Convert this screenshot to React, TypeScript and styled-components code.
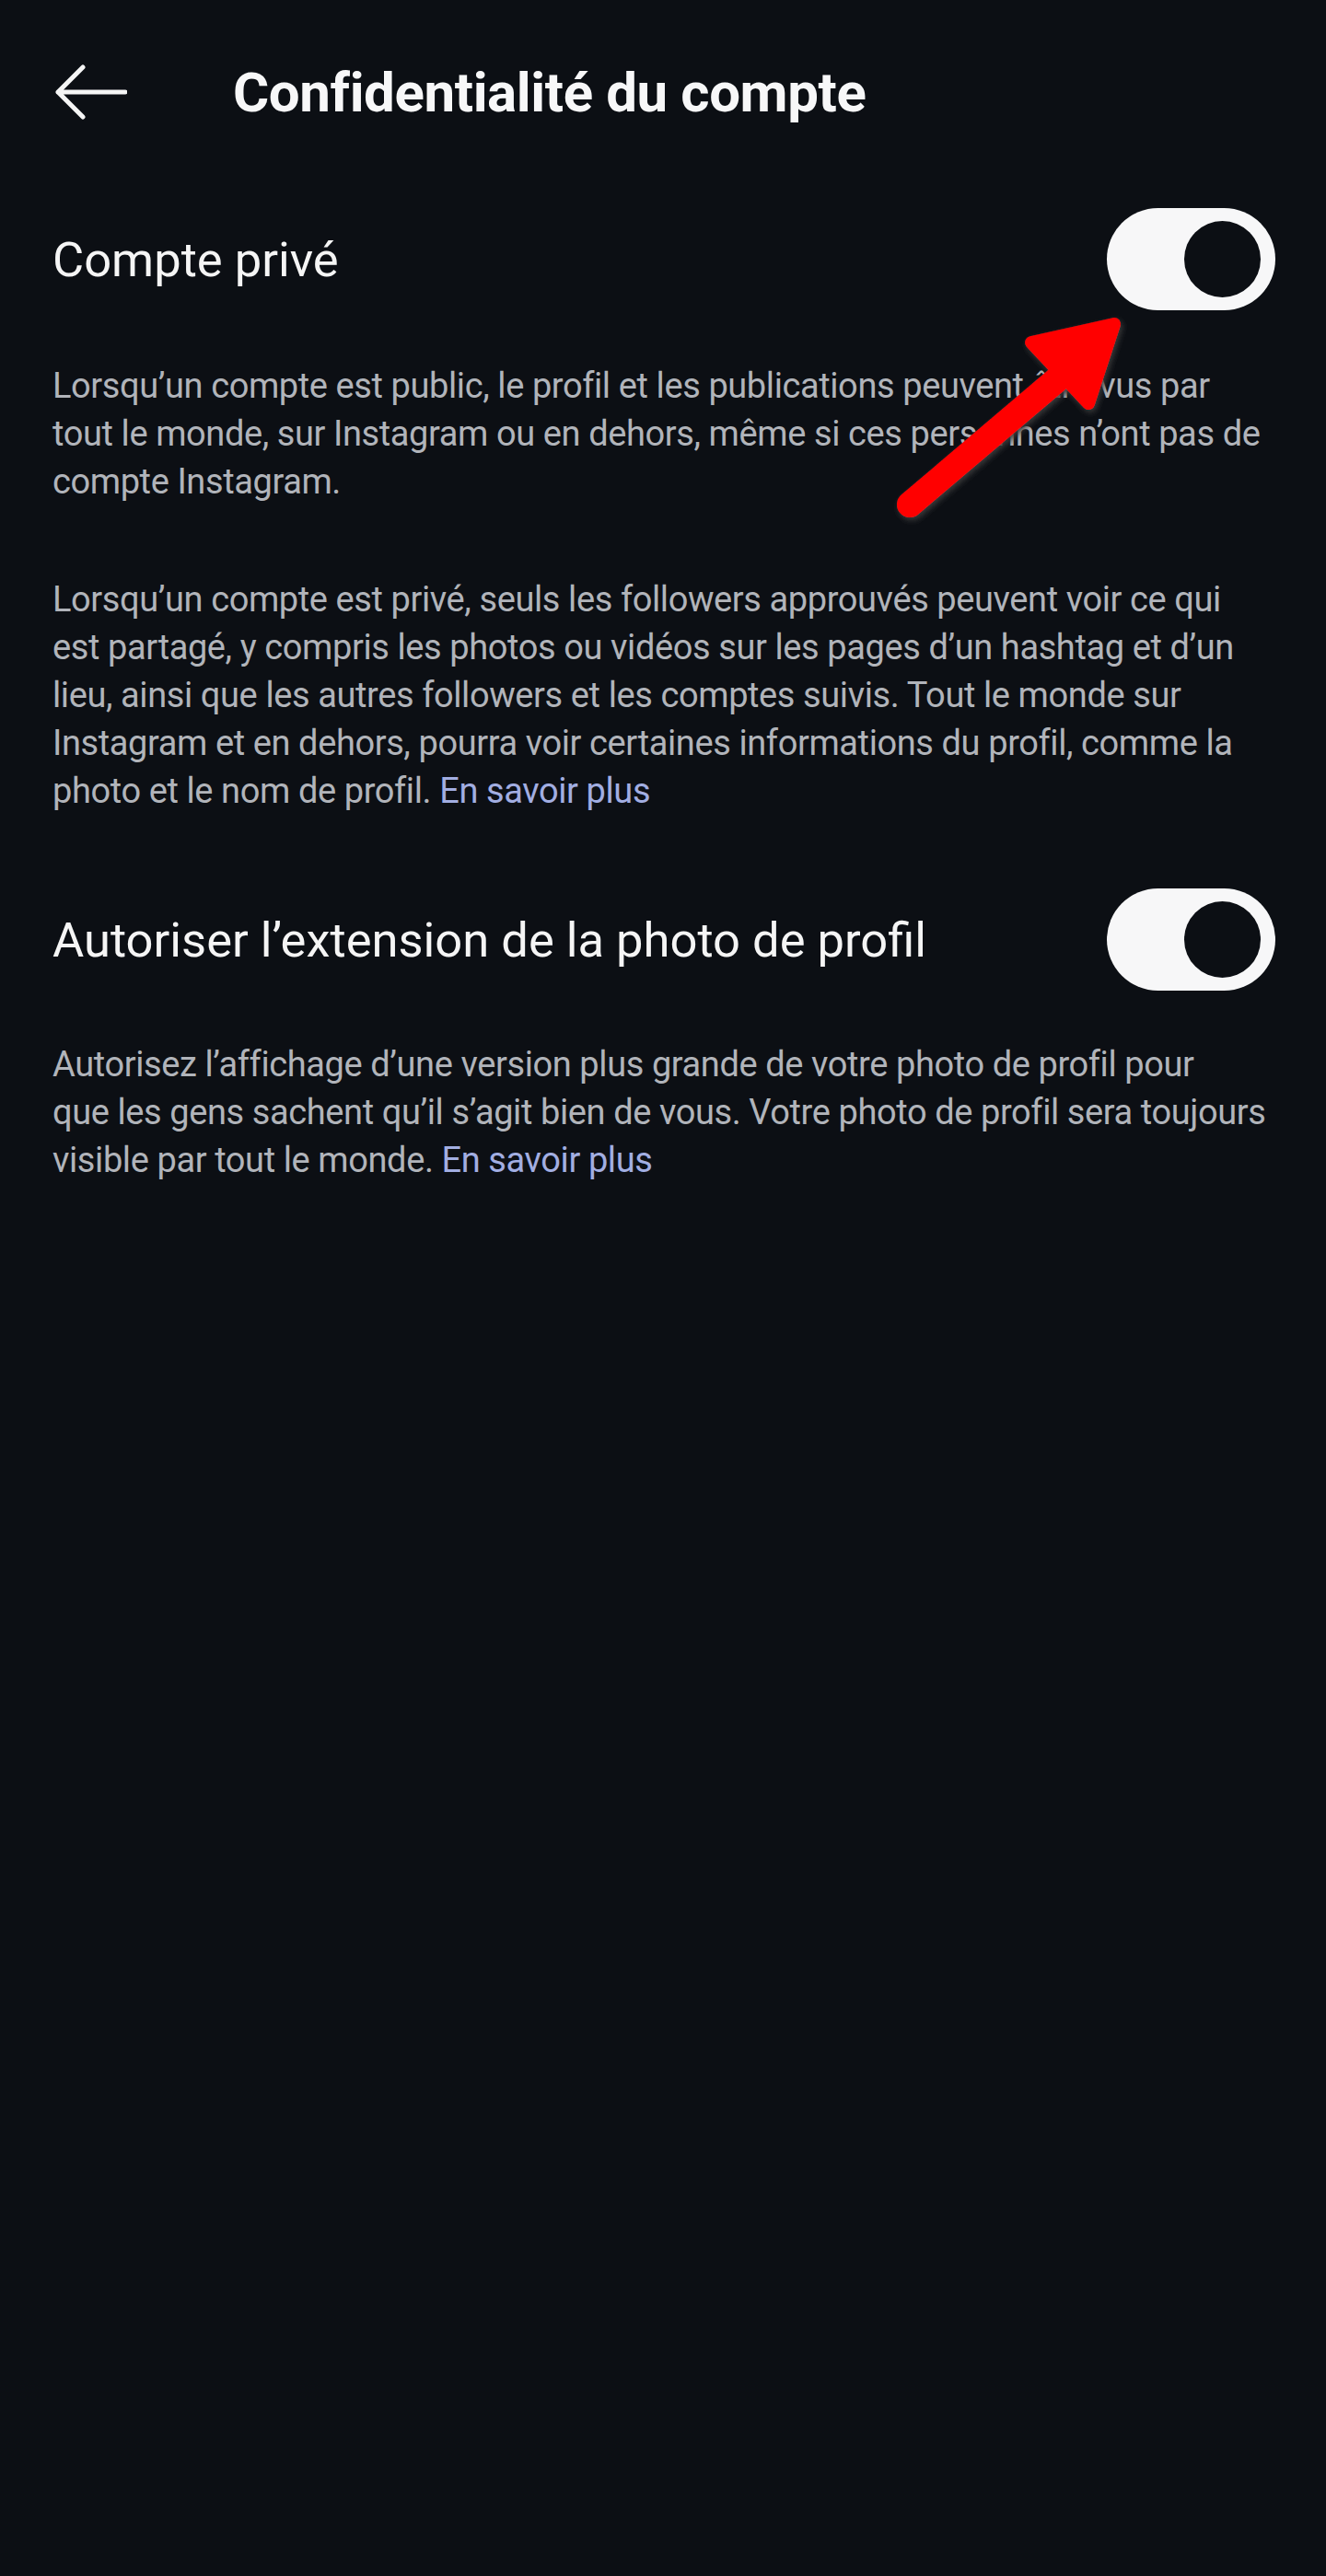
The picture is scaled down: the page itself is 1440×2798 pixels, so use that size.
import styled, { createGlobalStyle } from "styled-components";

const GlobalStyle = createGlobalStyle`
  html, body {
    margin: 0;
    padding: 0;
    background: #0c0f14;
  }
  * {
    box-sizing: border-box;
  }
`;

function BackArrow() {
  return (
    <svg width="80" height="60" viewBox="0 0 80 60" fill="none">
      <path
        d="M78 30H5M32 3L5 30L32 57"
        stroke="#f5f5f5"
        strokeWidth="5"
        strokeLinecap="round"
        strokeLinejoin="round"
      />
    </svg>
  );
}

type ToggleProps = { on?: boolean };

function Toggle({ on = true }: ToggleProps) {
  return (
    <Switch $on={on} role="switch" aria-checked={on}>
      <Knob />
    </Switch>
  );
}

// lines are given one by one so they wrap where the screenshot wraps
function Lines({ lines }: { lines: string[] }) {
  return (
    <>
      {lines.map((l, i) => (
        <span key={i}>
          {l}
          {i < lines.length - 1 && <br />}
        </span>
      ))}
    </>
  );
}

function PointerArrow() {
  return (
    <Annotation width="1440" height="600" viewBox="0 0 1440 600">
      <defs>
        <filter id="halo" x="-20%" y="-20%" width="140%" height="140%">
          <feDropShadow dx="2" dy="3" stdDeviation="3" floodColor="#3a3a3a" floodOpacity="1" />
        </filter>
      </defs>
      <g filter="url(#halo)">
        <line x1="988" y1="548" x2="1160" y2="402" stroke="#ff0000" strokeWidth="28" strokeLinecap="round" />
        <polygon
          points="1120,372 1210,352 1182,438"
          fill="#ff0000"
          stroke="#ff0000"
          strokeWidth="14"
          strokeLinejoin="round"
        />
      </g>
    </Annotation>
  );
}

export default function App() {
  return (
    <Page>
      <GlobalStyle />
      <Header>
        <BackButton aria-label="Retour">
          <BackArrow />
        </BackButton>
        <Title>Confidentialité du compte</Title>
      </Header>

      <SettingRow $top={26}>
        <Label>Compte privé</Label>
        <Toggle on />
      </SettingRow>
      <Description $top={56}>
        <Lines
          lines={[
            "Lorsqu’un compte est public, le profil et les publications peuvent être vus par",
            "tout le monde, sur Instagram ou en dehors, même si ces personnes n’ont pas de",
            "compte Instagram.",
          ]}
        />
      </Description>
      <Description $top={76}>
        <Lines
          lines={[
            "Lorsqu’un compte est privé, seuls les followers approuvés peuvent voir ce qui",
            "est partagé, y compris les photos ou vidéos sur les pages d’un hashtag et d’un",
            "lieu, ainsi que les autres followers et les comptes suivis. Tout le monde sur",
            "Instagram et en dehors, pourra voir certaines informations du profil, comme la",
            "photo et le nom de profil. ",
          ]}
        />
        <MoreLink href="#">En savoir plus</MoreLink>
      </Description>

      <SettingRow $top={80}>
        <Label>Autoriser l’extension de la photo de profil</Label>
        <Toggle on />
      </SettingRow>
      <Description $top={54}>
        <Lines
          lines={[
            "Autorisez l’affichage d’une version plus grande de votre photo de profil pour",
            "que les gens sachent qu’il s’agit bien de vous. Votre photo de profil sera toujours",
            "visible par tout le monde. ",
          ]}
        />
        <MoreLink href="#">En savoir plus</MoreLink>
      </Description>

      <PointerArrow />
    </Page>
  );
}

const Page = styled.div`
  position: relative;
  min-height: 2798px;
  background: #0c0f14;
  padding: 0 40px 0 57px;
  font-family: Roboto, "Liberation Sans", sans-serif;
  color: #f5f5f5;
`;

const Header = styled.header`
  height: 200px;
  display: flex;
  align-items: center;
`;

const BackButton = styled.button`
  display: flex;
  align-items: center;
  background: none;
  border: 0;
  padding: 0;
  margin: 0 0 0 1px;
  cursor: pointer;
`;

const Title = styled.h1`
  margin: 0 0 0 115px;
  font-size: 60px;
  font-weight: 700;
  letter-spacing: -0.4px;
  color: #f7f7f8;
`;

const SettingRow = styled.div<{ $top: number }>`
  margin-top: ${(p) => p.$top}px;
  margin-right: 15px;
  display: flex;
  align-items: center;
  justify-content: space-between;
`;

const Label = styled.span`
  font-size: 52.5px;
  font-weight: 400;
  color: #f5f5f5;
`;

const Switch = styled.div<{ $on: boolean }>`
  width: 183px;
  height: 111px;
  border-radius: 56px;
  background: ${(p) => (p.$on ? "#f7f7f8" : "#3a3d44")};
  display: flex;
  align-items: center;
  justify-content: ${(p) => (p.$on ? "flex-end" : "flex-start")};
  padding: 0 16px;
  flex-shrink: 0;
`;

const Knob = styled.div`
  width: 83px;
  height: 83px;
  border-radius: 50%;
  background: #0c0f14;
`;

const Description = styled.p<{ $top: number }>`
  margin: ${(p) => p.$top}px 0 0;
  font-size: 38px;
  line-height: 52px;
  letter-spacing: -0.4px;
  white-space: nowrap;
  color: #b1b4ba;
`;

const MoreLink = styled.a`
  color: #a2aee2;
  text-decoration: none;
`;

const Annotation = styled.svg`
  position: absolute;
  top: 0;
  left: 0;
  pointer-events: none;
`;
